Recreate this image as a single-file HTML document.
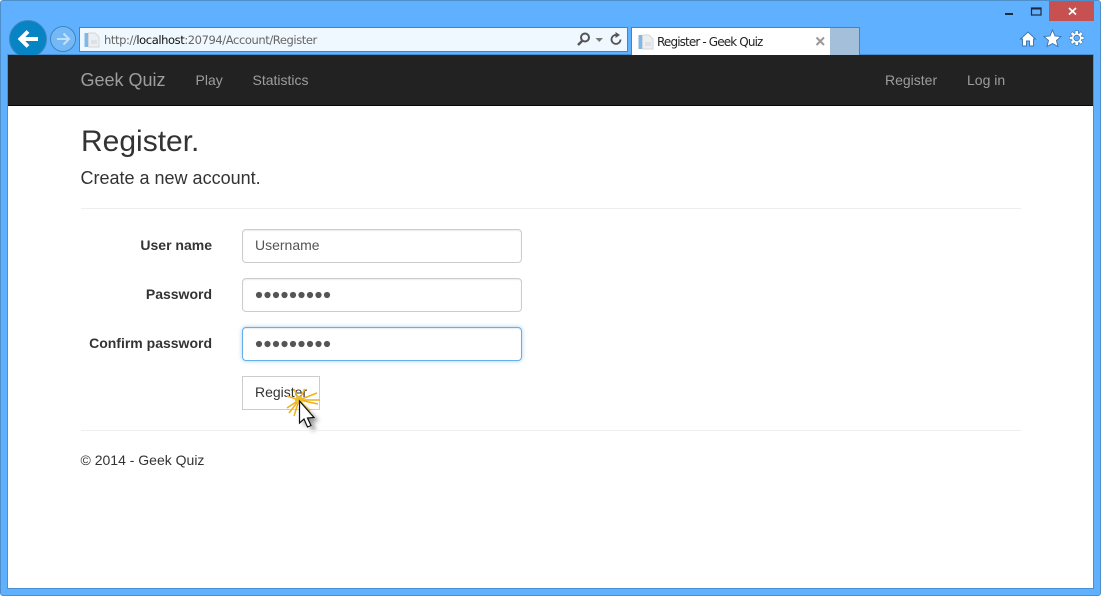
<!DOCTYPE html>
<html lang="en"><head><meta charset="utf-8"><title>Register - Geek Quiz</title>
<style>
html,body{margin:0;padding:0;width:1101px;height:596px;overflow:hidden;background:#fff}
body{position:relative;font-family:"Liberation Sans",sans-serif;color:#333}
.a{position:absolute;white-space:nowrap}
#win{position:absolute;left:0;top:0;width:1099px;height:594px;background:#5fb0ff;border:1px solid #4f8fc9;border-radius:3px}
#view{position:absolute;left:8px;top:55px;width:1085px;height:533px;background:#fff;box-shadow:0 0 0 1px #4a90d0}
#nav{position:absolute;left:8px;top:55px;width:1085px;height:51px;background:#222;border-bottom:1px solid #080808;box-sizing:border-box}
.n{color:#9d9d9d;font-size:14px;line-height:20px}
.inp{position:absolute;left:242px;width:280px;height:34px;box-sizing:border-box;background:#fff;border:1px solid #ccc;border-radius:4px;box-shadow:inset 0 1px 1px rgba(0,0,0,.075)}
.lab{position:absolute;right:889px;font-size:14px;font-weight:bold;line-height:20px;color:#333;white-space:nowrap}
hr{position:absolute;left:81px;width:940px;margin:0;border:0;border-top:1px solid #eee}
svg{position:absolute;overflow:visible}
</style></head><body>
<div id="win"></div>
<div id="view"></div>

<!-- back / forward -->
<svg style="left:0;top:0" width="110" height="56" viewBox="0 0 110 56">
<circle cx="28" cy="39" r="18.500" fill="#0784c3" stroke="#3f86bf" stroke-width="1"/>
<path d="M38 39H21M28 31.500L20.500 39L28 46.500" fill="none" stroke="#fff" stroke-width="4"/>
<circle cx="63" cy="39" r="12.500" fill="#74b8f6" stroke="#3f86bf" stroke-width="1"/>
<path d="M70 39H57M63.500 33.500L69 39L63.500 44.500" fill="none" stroke="#c3e0fa" stroke-width="2"/>
</svg>

<!-- address bar -->
<div class="a" style="left:79px;top:27px;width:547px;height:23px;background:#eff7ff;border:1px solid #3f86bf"></div>
<svg style="left:84px;top:32px" width="16" height="16" viewBox="0 0 16 16">
<rect x="0.500" y="1" width="4" height="14" fill="#7db8e8"/><path d="M4.500 1H11L15 5V15H4.500Z" fill="#eceff2" stroke="#d3d7db"/><rect x="7" y="8" width="6" height="4" fill="#dde1e5"/>
</svg>
<div class="a" style="left:104px;top:32px;font-size:11.500px;line-height:16px;color:#666;font-family:'DejaVu Sans',sans-serif;letter-spacing:-.41px">http://<span style="color:#111">localhost</span>:20794/Account/Register</div>
<svg style="left:576px;top:31px" width="48" height="16" viewBox="0 0 48 16">
<circle cx="9" cy="6.500" r="4" fill="none" stroke="#555" stroke-width="2"/><path d="M6 10L2 14" stroke="#555" stroke-width="2.400"/>
<path d="M19.500 7H27L23.250 11Z" fill="#777"/>
<path d="M44.500 8.500A4.500 4.500 0 1 1 41.500 4.200" fill="none" stroke="#555" stroke-width="1.800"/><path d="M39.500 1L44 4L39.500 7Z" fill="#555"/>
</svg>

<!-- tab -->
<div class="a" style="left:631px;top:27px;width:198px;height:27px;background:#fff;border:1px solid #3f86bf;border-bottom:0"></div>
<div class="a" style="left:830px;top:27px;width:29px;height:27px;background:#a3bfda;border:1px solid #3f86bf;border-left:0;border-bottom:0"></div>
<svg style="left:638px;top:34px" width="16" height="16" viewBox="0 0 16 16">
<rect x="0.500" y="1" width="4" height="14" fill="#7db8e8"/><path d="M4.500 1H11L15 5V15H4.500Z" fill="#eceff2" stroke="#d3d7db"/><rect x="7" y="8" width="6" height="4" fill="#dde1e5"/>
</svg>
<div class="a" style="left:657px;top:34px;font-size:12px;line-height:16px;color:#222;font-family:'DejaVu Sans',sans-serif;letter-spacing:-.87px">Register - Geek Quiz</div>
<svg style="left:815px;top:36px" width="11" height="11" viewBox="0 0 11 11"><path d="M1.500 1.500L9 9M9 1.500L1.500 9" stroke="#999" stroke-width="2"/></svg>

<!-- window controls -->
<div class="a" style="left:1049px;top:1px;width:45px;height:20px;background:#c75050"></div>
<svg style="left:1000px;top:0" width="100" height="56" viewBox="0 0 100 56">
<rect x="5" y="13" width="8" height="2" fill="#1c2b3a"/>
<rect x="31.500" y="8" width="9.500" height="7" fill="none" stroke="#1c2b3a" stroke-width="1.200"/><rect x="31.500" y="7.500" width="9.500" height="2" fill="#1c2b3a"/>
<path d="M69 8L76 14.500M76 8L69 14.500" stroke="#fff" stroke-width="1.800"/>
<path d="M20.500 39L28 32L35.500 39H33.500V46H29.500V41H26.500V46H22.500V39Z" fill="#fff" stroke="#3a73a8" stroke-width=".9"/>
<path d="M52.500 30L55 36L61 36.500L56.500 40.500L58 46.500L52.500 43.500L47 46.500L48.500 40.500L44 36.500L50 36Z" fill="#fff" stroke="#3a73a8" stroke-width=".9"/>
<g transform="translate(76.700 38)">
<path d="M0-7.500V7.500M-7.500 0H7.500M-5.300-5.300L5.300 5.300M5.300-5.300L-5.300 5.300" stroke="#3a73a8" stroke-width="3.800"/>
<circle r="4.800" fill="#fff" stroke="#3a73a8" stroke-width="1"/>
<path d="M0-7V7M-7 0H7M-5-5L5 5M5-5L-5 5" stroke="#fff" stroke-width="2.600"/>
<circle r="4.800" fill="#fff"/>
<circle r="2.800" fill="#5fb0ff" stroke="#3a73a8" stroke-width=".8"/>
</g>
</svg>

<!-- navbar -->
<div id="nav"></div>
<div class="a" style="left:80.500px;top:70px;font-size:18px;line-height:20px;color:#9d9d9d">Geek Quiz</div>
<div class="a n" style="left:195.500px;top:70px">Play</div>
<div class="a n" style="left:252.500px;top:70px">Statistics</div>
<div class="a n" style="left:885px;top:70px">Register</div>
<div class="a n" style="left:967px;top:70px">Log in</div>

<!-- heading -->
<div class="a" style="left:81px;top:125px;font-size:30px;line-height:33px;font-weight:500;color:#333">Register.</div>
<div class="a" style="left:80.500px;top:168px;font-size:18px;line-height:20px;color:#333">Create a new account.</div>
<hr style="top:208px">

<!-- form -->
<div class="lab" style="top:235px">User name</div>
<div class="inp" style="top:229px"></div>
<div class="a" style="left:255px;top:235px;font-size:14px;line-height:20px;color:#555">Username</div>

<div class="lab" style="top:284px">Password</div>
<div class="inp" style="top:278px"></div>
<svg style="left:255px;top:290px" width="80" height="10" viewBox="0 0 80 10" fill="#555"><circle cx="4" cy="5" r="3.100"/><circle cx="12.500" cy="5" r="3.100"/><circle cx="21" cy="5" r="3.100"/><circle cx="29.500" cy="5" r="3.100"/><circle cx="38" cy="5" r="3.100"/><circle cx="46.500" cy="5" r="3.100"/><circle cx="55" cy="5" r="3.100"/><circle cx="63.500" cy="5" r="3.100"/><circle cx="72" cy="5" r="3.100"/></svg>

<div class="lab" style="top:333px">Confirm password</div>
<div class="inp" style="top:327px;border-color:#66afe9;box-shadow:inset 0 1px 1px rgba(0,0,0,.075),0 0 4px rgba(102,175,233,.6)"></div>
<svg style="left:255px;top:339px" width="80" height="10" viewBox="0 0 80 10" fill="#555"><circle cx="4" cy="5" r="3.100"/><circle cx="12.500" cy="5" r="3.100"/><circle cx="21" cy="5" r="3.100"/><circle cx="29.500" cy="5" r="3.100"/><circle cx="38" cy="5" r="3.100"/><circle cx="46.500" cy="5" r="3.100"/><circle cx="55" cy="5" r="3.100"/><circle cx="63.500" cy="5" r="3.100"/><circle cx="72" cy="5" r="3.100"/></svg>

<div class="a" style="left:242px;top:376px;width:78px;height:34px;box-sizing:border-box;border:1px solid #ccc;background:#fff"></div>
<div class="a" style="left:255px;top:382px;font-size:14px;line-height:20px;color:#333">Register</div>

<!-- click burst and cursor -->
<svg style="left:280px;top:380px" width="50" height="50" viewBox="0 0 50 50">
<defs><filter id="b" x="-50%" y="-50%" width="200%" height="200%"><feGaussianBlur stdDeviation="2"/></filter></defs>
<path d="M24 26L24 47L28.500 43L32 51L36 49.500L32.500 42L39 41Z" fill="#555" opacity=".6" filter="url(#b)"/>
<path d="M19 20L25 9M19 20L37 13M19 20L40 20M19 20L38 24M19 20L7 28M19 20L7 16M19 20L14 9M19 20L14 36M19 20L9 33M19 20L30 31" stroke="#eeb21a" stroke-width="1.500" fill="none"/>
<circle cx="19" cy="20" r="4" fill="#ecc030"/>
<path d="M19.500 21L19.500 43L24 39L27.500 47L31 45.500L27.500 38L34 37.500Z" fill="#fff" stroke="#111" stroke-width="1.200"/>
</svg>

<hr style="top:430px">
<div class="a" style="left:80.500px;top:450px;font-size:14px;line-height:20px;color:#333">© 2014 - Geek Quiz</div>
</body></html>
